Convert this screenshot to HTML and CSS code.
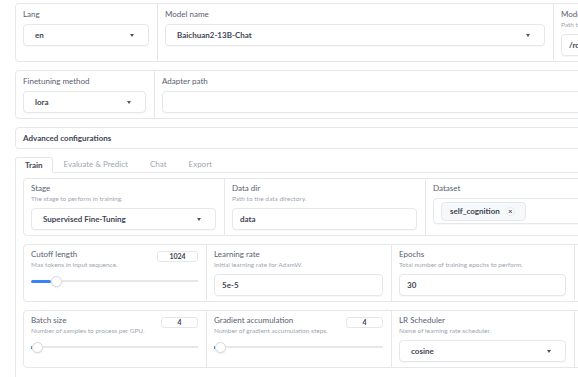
FILE: index.html
```html
<!DOCTYPE html>
<html lang="en">
<head>
  <meta charset="UTF-8" />
  <meta name="viewport" content="width=device-width, initial-scale=1.0"/>
  <title>LLaMA Board</title>
  <link rel="stylesheet" href="styles.css">
</head>
<body>
  <div class="page">

    <div class="card top">
      <div class="col w-lang">
        <span class="label">Lang</span>
        <div class="field select"><span>en</span><i class="caret"></i></div>
      </div>
      <div class="col w-model">
        <span class="label">Model name</span>
        <div class="field select"><span>Baichuan2-13B-Chat</span><i class="caret"></i></div>
      </div>
      <div class="col w-path">
        <span class="label">Model path</span>
        <span class="info">Path to pretrained model or model identifier from Hugging Face.</span>
        <div class="field"><span>/root/models/Baichuan2-13B-Chat</span></div>
      </div>
    </div>

    <div class="card top">
      <div class="col w-method">
        <span class="label">Finetuning method</span>
        <div class="field select"><span>lora</span><i class="caret"></i></div>
      </div>
      <div class="col w-adapter">
        <span class="label">Adapter path</span>
        <div class="field"></div>
      </div>
    </div>

    <div class="accordion">Advanced configurations</div>

    <div class="tabs">
      <div class="tab on">Train</div>
      <div class="tab">Evaluate &amp; Predict</div>
      <div class="tab">Chat</div>
      <div class="tab">Export</div>
    </div>

    <div class="panel">
      <div class="card">
        <div class="col w-third">
          <span class="label">Stage</span>
          <span class="info">The stage to perform in training.</span>
          <div class="field select"><span>Supervised Fine-Tuning</span><i class="caret"></i></div>
        </div>
        <div class="col w-third2">
          <span class="label">Data dir</span>
          <span class="info">Path to the data directory.</span>
          <div class="field"><span>data</span></div>
        </div>
        <div class="col w-third">
          <span class="label">Dataset</span>
          <div class="field tags">
            <span class="chip">self_cognition <i class="close">×</i></span>
          </div>
        </div>
      </div>

      <div class="card">
        <div class="col w-a">
          <div class="head">
            <span class="label">Cutoff length</span>
            <span class="num wide">1024</span>
          </div>
          <span class="info">Max tokens in input sequence.</span>
          <div class="slider">
            <div class="fill" style="width: 20px"></div>
            <div class="thumb"></div>
            <div class="rest"></div>
          </div>
        </div>
        <div class="col w-b">
          <span class="label">Learning rate</span>
          <span class="info">Initial learning rate for AdamW.</span>
          <div class="field"><span>5e-5</span></div>
        </div>
        <div class="col w-c">
          <span class="label">Epochs</span>
          <span class="info">Total number of training epochs to perform.</span>
          <div class="field"><span>30</span></div>
        </div>
        <div class="col w-c">
          <span class="label">Max samples</span>
          <span class="info">Maximum samples per dataset.</span>
          <div class="field"><span>100000</span></div>
        </div>
      </div>

      <div class="card">
        <div class="col w-a">
          <div class="head">
            <span class="label">Batch size</span>
            <span class="num">4</span>
          </div>
          <span class="info">Number of samples to process per GPU.</span>
          <div class="slider">
            <div class="fill" style="width: 1px"></div>
            <div class="thumb"></div>
            <div class="rest"></div>
          </div>
        </div>
        <div class="col w-b">
          <div class="head">
            <span class="label">Gradient accumulation</span>
            <span class="num">4</span>
          </div>
          <span class="info">Number of gradient accumulation steps.</span>
          <div class="slider">
            <div class="fill" style="width: 1px"></div>
            <div class="thumb"></div>
            <div class="rest"></div>
          </div>
        </div>
        <div class="col w-c">
          <span class="label">LR Scheduler</span>
          <span class="info">Name of learning rate scheduler.</span>
          <div class="field select"><span>cosine</span><i class="caret"></i></div>
        </div>
        <div class="col w-c">
          <span class="label">Maximum gradient norm</span>
          <span class="info">Norm for gradient clipping.</span>
          <div class="field"><span>1.0</span></div>
        </div>
      </div>
    </div>

  </div>
</body>
</html>
```

FILE: styles.css
```css
html, body {
  margin: 0;
  background: #fff;
  overflow: hidden;
}
body {
  font-family: Lato, "Liberation Sans", sans-serif;
  color: #374151;
}
.page {
  width: 820px;
  padding: 3px 0 0 15px;
}
.card {
  display: flex;
  border: 1px solid #e5e7eb;
  border-radius: 4px;
  background: #fff;
  margin-bottom: 8px;
}
.col {
  flex: none;
  box-sizing: border-box;
  padding: 4px 8px 5px 7px;
}
.top .col {
  padding-top: 5px;
}
.col + .col {
  border-left: 1px solid #e5e7eb;
}
.w-lang { width: 141px; }
.w-model { width: 396px; }
.w-path { width: 220px; }
.w-method { width: 138px; }
.w-adapter { width: 620px; }
.w-third { width: 200px; }
.w-third2 { width: 201px; }
.w-a { width: 182px; }
.w-b { width: 185px; }
.w-c { width: 183px; }

.label {
  display: block;
  font-size: 8px;
  line-height: 10px;
  color: #596070;
  margin-bottom: 5px;
  white-space: nowrap;
}
.info {
  display: block;
  font-size: 6.5px;
  line-height: 8px;
  color: #a0a6b1;
  margin: -3px 0 5px;
  white-space: nowrap;
}
.head {
  display: flex;
  justify-content: space-between;
  height: 10px;
  margin-bottom: 5px;
}
.head .label {
  margin: 0;
}
.num {
  box-sizing: border-box;
  width: 37px;
  height: 11px;
  margin-top: 2px;
  border: 1px solid #e5e7eb;
  border-radius: 3px;
  font-size: 7px;
  line-height: 9px;
  font-weight: 700;
  text-align: center;
  color: #3f4654;
  background: #fff;
}
.num.wide {
  width: 41px;
}

.field {
  box-sizing: border-box;
  height: 22px;
  display: flex;
  align-items: center;
  padding: 0 7px;
  border: 1px solid #e5e7eb;
  border-radius: 4px;
  background: #fff;
  box-shadow: 0 1px 1px rgba(0,0,0,0.03);
  font-size: 8px;
  font-weight: 700;
  color: #3f4654;
  white-space: nowrap;
  overflow: hidden;
}
.select {
  justify-content: space-between;
  padding: 0 14px 0 11px;
}
.caret {
  width: 0;
  height: 0;
  border-left: 2.5px solid transparent;
  border-right: 2.5px solid transparent;
  border-top: 3px solid #4b5563;
}
.tags {
  height: 26px;
  padding: 0 7px;
}
.chip {
  display: flex;
  align-items: center;
  gap: 6px;
  height: 17px;
  padding: 0 10px 0 8px;
  border: 1px solid #e5e7eb;
  border-radius: 4px;
  background: #f7f8fa;
  font-size: 8px;
  font-weight: 700;
}
.close {
  box-sizing: border-box;
  width: 9px;
  height: 9px;
  border-radius: 50%;
  border: 1px solid #e5e7eb;
  background: #fff;
  font-style: normal;
  font-size: 8px;
  line-height: 7px;
  text-align: center;
  color: #4b5563;
}

.slider {
  display: flex;
  align-items: center;
  height: 14px;
}
.fill {
  height: 3px;
  background: #3b82f6;
  border-radius: 2px;
}
.thumb {
  box-sizing: border-box;
  width: 11px;
  height: 11px;
  border-radius: 50%;
  border: 1px solid #d6d9de;
  background: #fff;
  box-shadow: 0 1px 2px rgba(0,0,0,0.08);
}
.rest {
  flex: 1;
  height: 2px;
  background: #e5e7eb;
}

.accordion {
  box-sizing: border-box;
  height: 22px;
  line-height: 20px;
  padding: 0 7px;
  border: 1px solid #e5e7eb;
  border-radius: 4px;
  margin-bottom: 8px;
  font-size: 8px;
  font-weight: 700;
  color: #3f4654;
}

.tabs {
  display: flex;
  height: 15px;
  border-bottom: 1px solid #e5e7eb;
}
.tab {
  box-sizing: border-box;
  height: 15px;
  line-height: 15px;
  padding: 0 11px;
  font-size: 8px;
  color: #a0a6b1;
}
.tab.on {
  height: 16px;
  line-height: 14px;
  padding: 0 9px;
  border: 1px solid #e5e7eb;
  border-bottom-color: #fff;
  border-radius: 3px 3px 0 0;
  background: #fff;
  color: #3f4654;
  font-weight: 700;
}
.panel {
  border: 1px solid #e5e7eb;
  border-top: none;
  padding: 5px 7px;
}
```
